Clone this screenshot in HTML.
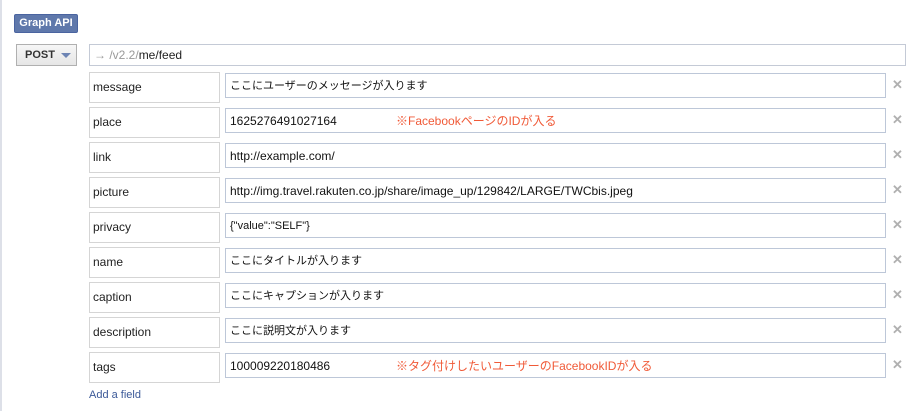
<!DOCTYPE html>
<html><head><meta charset="utf-8"><style>
body{margin:0;width:922px;height:411px;background:#fff;position:relative;overflow:hidden;font-family:"Liberation Sans","Noto Sans CJK JP",sans-serif;}
.edge{position:absolute;left:0;top:0;width:2px;height:411px;background:#dde0e8}
.badge{position:absolute;left:14px;top:14px;width:62px;height:17px;background:#5f78ab;border:1px solid #4a64a0;border-radius:2px;color:#fff;font-weight:bold;font-size:11px;line-height:17px;text-align:center}
.post{position:absolute;left:16px;top:44px;width:59px;height:20px;background:linear-gradient(#f6f6f6,#e6e6e6);border:1px solid #b0b0b0;font-weight:bold;font-size:11px;line-height:20px;color:#333}
.post span{position:absolute;left:8px}
.post i{position:absolute;left:44px;top:8px;width:0;height:0;border-left:5px solid transparent;border-right:5px solid transparent;border-top:5px solid #6d84b4}
.url{position:absolute;left:89px;top:44px;width:815px;height:20px;border:1px solid #c4cad6;font-size:12px;line-height:20px;color:#222}
.url b{font-weight:normal;color:#999;margin-left:4px}
.key{position:absolute;left:89px;width:126px;height:29px;border:1px solid #d5d5d5;font-size:12px;line-height:29px;color:#222;padding-left:3px}
.val{position:absolute;left:225px;box-sizing:border-box;width:661px;height:25px;border:1px solid #bdc7d8;font-size:12px;line-height:25px;color:#111;padding-left:4px;white-space:nowrap}
.j{font-size:11px}
.note{position:absolute;color:#f05a38;font-size:12px;left:170px;top:0}
.x{position:absolute;left:892px;font-size:13px;color:#b0b0b0;font-weight:bold}
.add{position:absolute;left:89px;top:389px;font-size:11px;color:#3b5998}
</style></head><body>
<div class="edge"></div>
<div class="badge">Graph API</div>
<div class="post"><span>POST</span><i></i></div>
<div class="url"><b>→ /v2.2/</b>me/feed</div>

<div class="key" style="top:72px">message</div><div class="val j" style="top:73px">ここにユーザーのメッセージが入ります</div><div class="x" style="top:77px">✕</div>
<div class="key" style="top:107px">place</div><div class="val" style="top:108px">1625276491027164<span class="note">※FacebookページのIDが入る</span></div><div class="x" style="top:112px">✕</div>
<div class="key" style="top:142px">link</div><div class="val" style="top:143px">http://example.com/</div><div class="x" style="top:147px">✕</div>
<div class="key" style="top:177px">picture</div><div class="val" style="top:178px">http://img.travel.rakuten.co.jp/share/image_up/129842/LARGE/TWCbis.jpeg</div><div class="x" style="top:182px">✕</div>
<div class="key" style="top:212px">privacy</div><div class="val j" style="top:213px">{"value":"SELF"}</div><div class="x" style="top:217px">✕</div>
<div class="key" style="top:247px">name</div><div class="val j" style="top:248px">ここにタイトルが入ります</div><div class="x" style="top:252px">✕</div>
<div class="key" style="top:282px">caption</div><div class="val j" style="top:283px">ここにキャプションが入ります</div><div class="x" style="top:287px">✕</div>
<div class="key" style="top:317px">description</div><div class="val j" style="top:318px">ここに説明文が入ります</div><div class="x" style="top:322px">✕</div>
<div class="key" style="top:352px">tags</div><div class="val" style="top:353px">100009220180486<span class="note">※タグ付けしたいユーザーのFacebookIDが入る</span></div><div class="x" style="top:357px">✕</div>
<div class="add">Add a field</div>
</body></html>
